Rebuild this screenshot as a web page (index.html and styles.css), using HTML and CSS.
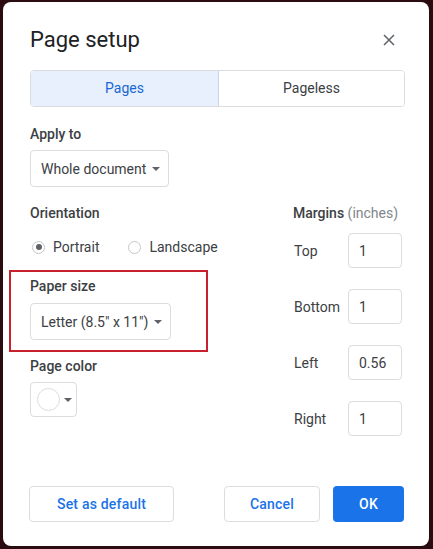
FILE: index.html
```html
<!DOCTYPE html>
<html lang="en">
<head>
    <meta charset="UTF-8">
    <meta name="viewport" content="width=device-width, initial-scale=1.0">
    <title>Page setup</title>
    <link rel="stylesheet" href="styles.css">
</head>
<body>
    <div class="dialog">
        <div class="dialog-header">
            <h1 class="dialog-title">Page setup</h1>
            <button class="btn-close" aria-label="Close">
                <svg width="12" height="12" viewBox="0 0 12 12">
                    <path d="M1 1 L11 11 M11 1 L1 11" stroke="#5f6368" stroke-width="1.5" fill="none"/>
                </svg>
            </button>
        </div>

        <div class="mode-tabs">
            <button class="mode-tab active">Pages</button>
            <button class="mode-tab">Pageless</button>
        </div>

        <div class="field field-apply">
            <div class="field-label">Apply to</div>
            <button class="select">Whole document <span class="caret"></span></button>
        </div>

        <div class="settings">
            <div class="settings-left">
                <div class="field">
                    <div class="field-label">Orientation</div>
                    <div class="radio-row">
                        <label class="radio checked"><span class="radio-dot"></span>Portrait</label>
                        <label class="radio"><span class="radio-dot"></span>Landscape</label>
                    </div>
                </div>

                <div class="field highlight">
                    <div class="field-label">Paper size</div>
                    <button class="select">Letter (8.5" x 11") <span class="caret"></span></button>
                </div>

                <div class="field">
                    <div class="field-label">Page color</div>
                    <button class="color-select"><span class="swatch"></span><span class="caret"></span></button>
                </div>
            </div>

            <div class="margins">
                <div class="field-label">Margins <span class="unit">(inches)</span></div>
                <div class="margin-row">
                    <span class="margin-label">Top</span>
                    <input class="margin-input" type="text" value="1">
                </div>
                <div class="margin-row">
                    <span class="margin-label">Bottom</span>
                    <input class="margin-input" type="text" value="1">
                </div>
                <div class="margin-row">
                    <span class="margin-label">Left</span>
                    <input class="margin-input" type="text" value="0.56">
                </div>
                <div class="margin-row">
                    <span class="margin-label">Right</span>
                    <input class="margin-input" type="text" value="1">
                </div>
            </div>
        </div>

        <div class="dialog-footer">
            <button class="btn btn-outline">Set as default</button>
            <div class="footer-actions">
                <button class="btn btn-outline btn-cancel">Cancel</button>
                <button class="btn btn-primary">OK</button>
            </div>
        </div>
    </div>
</body>
</html>
```

FILE: styles.css
```css
:root {
    --blue: #1a73e8;
    --text: #3c4043;
    --title: #202124;
    --border: #dadce0;
    --muted: #80868b;
}

* {
    box-sizing: border-box;
}

body {
    margin: 0;
    background: #2a0b10;
    font-family: Roboto, "Liberation Sans", Arial, sans-serif;
    color: var(--text);
    height: 549px;
    overflow: hidden;
}

button, input {
    font-family: inherit;
}

.dialog {
    margin: 2px 4px 0 3px;
    height: 544px;
    background: #fff;
    border-radius: 8px;
    padding: 24px 24px 0 27px;
    display: flex;
    flex-direction: column;
}

.dialog-header {
    display: flex;
    justify-content: space-between;
    align-items: center;
    height: 28px;
}

.dialog-title {
    margin: 0;
    font-size: 22px;
    font-weight: 400;
    line-height: 28px;
    color: var(--title);
}

.btn-close {
    border: none;
    background: none;
    padding: 0;
    width: 12px;
    height: 12px;
    margin-right: 10px;
    display: flex;
}

.mode-tabs {
    margin-top: 16px;
    display: grid;
    grid-template-columns: 188px 1fr;
    height: 37px;
    border: 1px solid var(--border);
    border-radius: 4px;
    overflow: hidden;
}

.mode-tab {
    border: none;
    background: #fff;
    font-size: 14px;
    color: var(--text);
    padding: 0 0 2px;
}

.mode-tab.active {
    background: #e8f0fe;
    color: #1967d2;
    border-right: 1px solid #c6d6ee;
}

.field {
    margin-top: 16px;
}

.field-apply {
    margin-top: 17px;
}

.field-label {
    font-size: 14px;
    font-weight: 500;
    line-height: 20px;
    color: var(--text);
}

.select {
    margin-top: 6px;
    height: 37px;
    border: 1px solid var(--border);
    border-radius: 4px;
    background: #fff;
    font-size: 14px;
    color: var(--text);
    padding: 0 8px 0 10px;
    display: inline-flex;
    align-items: center;
    gap: 6px;
}

.caret {
    width: 0;
    height: 0;
    border-left: 4px solid transparent;
    border-right: 4px solid transparent;
    border-top: 4px solid #5f6368;
}

.settings {
    display: flex;
    justify-content: space-between;
}

.settings-left {
    flex: 1;
}

.radio-row {
    margin-top: 14px;
    display: flex;
    gap: 29px;
    padding-left: 2px;
}

.radio {
    display: flex;
    align-items: center;
    gap: 8px;
    font-size: 14px;
    line-height: 20px;
}

.radio-dot {
    width: 13px;
    height: 13px;
    border: 1px solid #c4c7c5;
    border-radius: 50%;
    display: flex;
    align-items: center;
    justify-content: center;
}

.radio.checked .radio-dot::after {
    content: '';
    width: 6px;
    height: 6px;
    border-radius: 50%;
    background: #5f6368;
}

.highlight {
    position: relative;
    margin-top: 19px;
}

.highlight .select {
    margin-top: 7px;
}

/* marco rojo de anotación */
.highlight::after {
    content: '';
    position: absolute;
    top: -6px;
    left: -21px;
    width: 195px;
    height: 78px;
    border: 2px solid #c8202c;
}

.color-select {
    margin-top: 6px;
    width: 47px;
    height: 35px;
    border: 1px solid var(--border);
    border-radius: 4px;
    background: #fff;
    padding: 0 0 0 6px;
    display: flex;
    align-items: center;
    gap: 4px;
}

.swatch {
    width: 23px;
    height: 23px;
    border-radius: 50%;
    border: 1px solid var(--border);
    background: #fff;
}

.margins {
    width: 112px;
    margin-top: 16px;
}

.unit {
    font-weight: 400;
    color: var(--muted);
}

.margin-row {
    display: flex;
    align-items: center;
    margin-top: 10px;
}

.margin-row + .margin-row {
    margin-top: 21px;
}

.margin-label {
    width: 55px;
    font-size: 14px;
    padding-left: 1px;
}

.margin-input {
    width: 54px;
    height: 35px;
    border: 1px solid var(--border);
    border-radius: 4px;
    font-size: 14px;
    color: var(--text);
    padding: 0 0 0 10px;
    outline: none;
}

.dialog-footer {
    margin-top: auto;
    margin-bottom: 24px;
    display: flex;
    justify-content: space-between;
    align-items: center;
}

.footer-actions {
    display: flex;
    gap: 13px;
}

.btn {
    height: 36px;
    border-radius: 4px;
    font-size: 14px;
    font-weight: 500;
    padding: 0 24px;
    letter-spacing: 0.2px;
}

.btn-outline {
    border: 1px solid var(--border);
    background: #fff;
    color: var(--blue);
    margin-left: -1px;
    width: 145px;
}

.btn-cancel {
    width: 96px;
    margin-left: 0;
}

.btn-primary {
    border: none;
    background: var(--blue);
    color: #fff;
    width: 71px;
    margin-right: 1px;
}
```
